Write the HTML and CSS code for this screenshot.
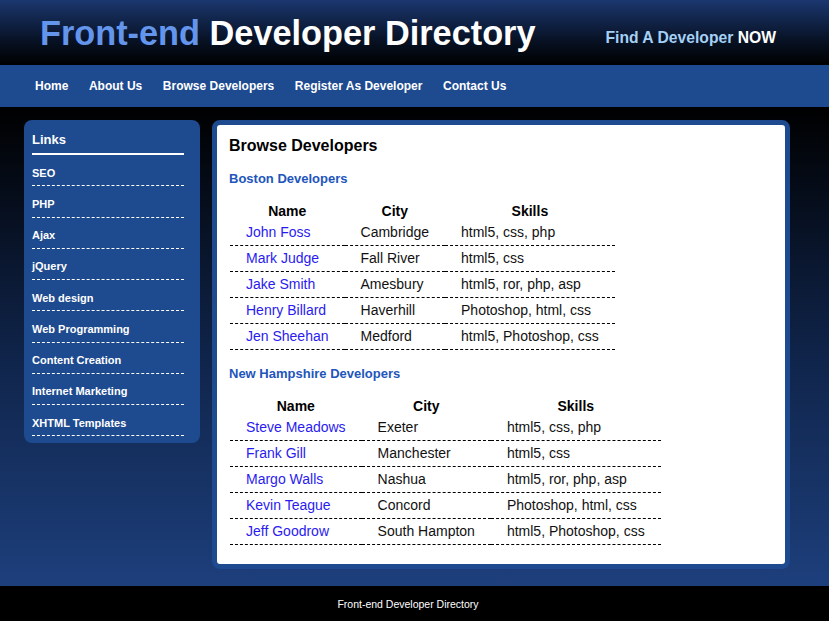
FILE: index.html
```html
<!DOCTYPE html>
<html lang="en">
<head>
<meta charset="utf-8">
<title>Front-end Developer Directory</title>
<link rel="stylesheet" href="styles.css">
</head>
<body>
<header class="site-header">
  <h1 class="logo"><span class="logo-accent">Front-end</span> Developer Directory</h1>
  <p class="tagline">Find A Developer <span class="tagline-strong">NOW</span></p>
</header>
<nav class="main-nav">
  <a href="#">Home</a>
  <a href="#">About Us</a>
  <a href="#">Browse Developers</a>
  <a href="#">Register As Developer</a>
  <a href="#">Contact Us</a>
</nav>
<div class="page">
  <aside class="sidebar">
    <h2 class="sidebar-title">Links</h2>
    <ul class="sidebar-list">
      <li><a href="#">SEO</a></li>
      <li><a href="#">PHP</a></li>
      <li><a href="#">Ajax</a></li>
      <li><a href="#">jQuery</a></li>
      <li><a href="#">Web design</a></li>
      <li><a href="#">Web Programming</a></li>
      <li><a href="#">Content Creation</a></li>
      <li><a href="#">Internet Marketing</a></li>
      <li><a href="#">XHTML Templates</a></li>
    </ul>
  </aside>
  <main class="content">
    <h2 class="content-title">Browse Developers</h2>
    <h3 class="group-title">Boston Developers</h3>
    <table class="dev-table">
      <thead><tr><th>Name</th><th>City</th><th>Skills</th></tr></thead>
      <tbody>
        <tr><td><a href="#">John Foss</a></td><td>Cambridge</td><td>html5, css, php</td></tr>
        <tr><td><a href="#">Mark Judge</a></td><td>Fall River</td><td>html5, css</td></tr>
        <tr><td><a href="#">Jake Smith</a></td><td>Amesbury</td><td>html5, ror, php, asp</td></tr>
        <tr><td><a href="#">Henry Billard</a></td><td>Haverhill</td><td>Photoshop, html, css</td></tr>
        <tr><td><a href="#">Jen Sheehan</a></td><td>Medford</td><td>html5, Photoshop, css</td></tr>
      </tbody>
    </table>
    <h3 class="group-title">New Hampshire Developers</h3>
    <table class="dev-table">
      <thead><tr><th>Name</th><th>City</th><th>Skills</th></tr></thead>
      <tbody>
        <tr><td><a href="#">Steve Meadows</a></td><td>Exeter</td><td>html5, css, php</td></tr>
        <tr><td><a href="#">Frank Gill</a></td><td>Manchester</td><td>html5, css</td></tr>
        <tr><td><a href="#">Margo Walls</a></td><td>Nashua</td><td>html5, ror, php, asp</td></tr>
        <tr><td><a href="#">Kevin Teague</a></td><td>Concord</td><td>Photoshop, html, css</td></tr>
        <tr><td><a href="#">Jeff Goodrow</a></td><td>South Hampton</td><td>html5, Photoshop, css</td></tr>
      </tbody>
    </table>
  </main>
</div>
<footer class="site-footer">
  <p>Front-end Developer Directory</p>
</footer>
</body>
</html>
```
FILE: styles.css
```css
* { box-sizing: border-box; }
html, body {
  margin: 0;
  padding: 0;
  background: #000;
  font-family: "Liberation Sans", Arial, sans-serif;
}
a { text-decoration: none; }

.site-header {
  height: 65px;
  display: flex;
  align-items: center;
  justify-content: space-between;
  padding: 0 53px 0 40px;
  background: linear-gradient(#1b376f 0%, #081327 60%, #000 100%);
}
.logo {
  margin: 0;
  font-size: 34.3px;
  line-height: 40px;
  font-weight: bold;
  color: #fff;
  white-space: nowrap;
}
.logo-accent { color: #6495ed; }
.tagline {
  margin: 10px 0 0;
  font-size: 15.7px;
  font-weight: bold;
  color: #a4d0f5;
}
.tagline-strong { color: #fff; }

.main-nav {
  height: 42px;
  display: flex;
  align-items: center;
  gap: 20.6px;
  padding: 0 0 0 35px;
  background: #1e4a8f;
}
.main-nav a {
  color: #fff;
  font-size: 12px;
  font-weight: bold;
}

.page {
  display: flex;
  align-items: flex-start;
  gap: 12px;
  padding: 13px 39px 17px 24px;
  background: linear-gradient(#000 0%, #0f2348 50%, #1d3f7c 100%);
}

.sidebar {
  width: 176px;
  flex: none;
  background: #1e4a8f;
  border-radius: 8px;
  padding: 12px 16px 7px 8px;
}
.sidebar-title {
  margin: 0;
  padding-bottom: 5px;
  border-bottom: 2px solid #fff;
  font-size: 13px;
  line-height: 16px;
  color: #fff;
}
.sidebar-list {
  list-style: none;
  margin: 0;
  padding: 0;
}
.sidebar-list li {
  padding: 11.5px 0 5.75px;
  border-bottom: 1px dashed #fff;
  font-size: 11px;
  line-height: 13px;
  font-weight: bold;
}
.sidebar-list a { color: #fff; }

.content {
  flex: 1;
  background: #fff;
  border: 5px solid #1e4a8f;
  border-radius: 8px;
  padding: 11px 12px 19px;
}
.content-title {
  margin: 0;
  font-size: 16px;
  line-height: 20px;
  color: #000;
}
.group-title {
  margin: 15px 0 16px;
  font-size: 13px;
  line-height: 16px;
  color: #2255bb;
}
.dev-table + .group-title { margin-top: 16px; }
.dev-table {
  border-collapse: collapse;
  margin-left: 1px;
  font-size: 14px;
  color: #111;
}
.dev-table th {
  padding: 0;
  line-height: 17px;
  font-weight: bold;
  color: #000;
  text-align: center;
}
.dev-table td {
  padding: 4px 16px 4px 16px;
  line-height: 17px;
  border-bottom: 1px dashed #000;
  white-space: nowrap;
}
.dev-table td a { color: #2a1bf0; }

.site-footer {
  height: 36px;
  display: flex;
  align-items: center;
  justify-content: center;
  padding-right: 13px;
  background: #000;
}
.site-footer p {
  margin: 0;
  font-size: 10.5px;
  color: #fff;
}
```
